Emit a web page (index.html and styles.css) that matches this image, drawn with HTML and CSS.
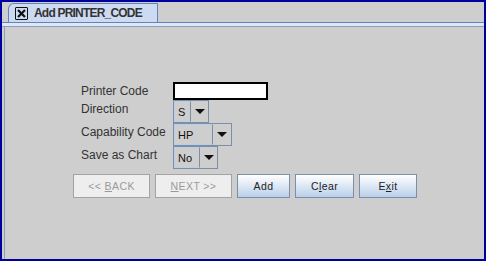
FILE: index.html
```html
<!DOCTYPE html>
<html lang="en">
<head>
    <meta charset="UTF-8">
    <title>Add PRINTER_CODE</title>
    <link rel="stylesheet" href="styles.css">
</head>
<body>
    <div class="frame">
        <div class="tabbar">
            <div class="tab">
                <span class="close-icon">
                    <svg width="11" height="11" viewBox="0 0 11 11">
                        <path d="M2 2 L9 9 M9 2 L2 9" stroke="#111" stroke-width="2.2" fill="none"/>
                    </svg>
                </span>
                <span class="tab-title">Add PRINTER_CODE</span>
            </div>
        </div>
        <div class="band"></div>
        <div class="panel">
            <div class="form">
                <div class="lbl">Printer Code</div>
                <div class="ctl"><div class="field"></div></div>

                <div class="lbl up">Direction</div>
                <div class="ctl">
                    <div class="combo combo-dir">
                        <div class="val">S</div>
                        <div class="arrow"><span class="tri"></span></div>
                    </div>
                </div>

                <div class="lbl up">Capability Code</div>
                <div class="ctl">
                    <div class="combo combo-cap">
                        <div class="val">HP</div>
                        <div class="arrow"><span class="tri"></span></div>
                    </div>
                </div>

                <div class="lbl up">Save as Chart</div>
                <div class="ctl">
                    <div class="combo combo-save">
                        <div class="val">No</div>
                        <div class="arrow"><span class="tri"></span></div>
                    </div>
                </div>
            </div>

            <div class="buttons">
                <button class="btn btn-nav" disabled>&lt;&lt; <u>B</u>ACK</button>
                <button class="btn btn-nav" disabled><u>N</u>EXT &gt;&gt;</button>
                <button class="btn btn-add">Add</button>
                <button class="btn btn-clear">C<u>l</u>ear</button>
                <button class="btn btn-exit">E<u>x</u>it</button>
            </div>
        </div>
    </div>
</body>
</html>
```

FILE: styles.css
```css
html, body {
    margin: 0;
    padding: 0;
    overflow: hidden;
}
body {
    font-family: "Liberation Sans", Arial, sans-serif;
    color: #333;
}
.frame {
    width: 486px;
    height: 261px;
    box-sizing: border-box;
    border: 2px solid #00009c;
    background: #cecece;
    display: flex;
    flex-direction: column;
}
.tabbar {
    height: 20px;
    padding-left: 6px;
    display: flex;
    align-items: flex-end;
}
.tab {
    width: 150px;
    height: 19px;
    box-sizing: border-box;
    background: #ccdaf2;
    border: 1px solid #6483bd;
    border-bottom: none;
    border-top-left-radius: 6px;
    display: flex;
    align-items: center;
    padding-left: 6px;
}
.close-icon {
    width: 13px;
    height: 13px;
    box-sizing: border-box;
    border: 1px solid #111;
    border-radius: 1px;
    display: flex;
    align-items: center;
    justify-content: center;
    margin-right: 6px;
}
.close-icon svg {
    display: block;
}
.tab-title {
    font-size: 12px;
    font-weight: bold;
    letter-spacing: -0.8px;
    color: #333;
}
.band {
    height: 3px;
    background: #dde7f6;
    border-top: 1px solid #6483bd;
    border-bottom: 1px solid #8e9dba;
}
.panel {
    flex: 1;
    margin-left: 2px;
    border-left: 1px solid #8e9dba;
    padding-top: 55px;
}
.form {
    display: grid;
    grid-template-columns: 92px auto;
    grid-template-rows: 18px 23px 23px 23px;
    margin-left: 76px;
}
.lbl {
    font-size: 12px;
    display: flex;
    align-items: center;
    color: #333;
}
.lbl.up {
    padding-bottom: 6px;
}
.ctl {
    display: flex;
    align-items: flex-start;
}
.field {
    width: 95px;
    height: 18px;
    box-sizing: border-box;
    border: 2px solid #000;
    background: #fff;
}
.combo {
    display: flex;
    height: 23px;
    box-sizing: border-box;
    border: 1px solid #7d8ea8;
    background: #cecece;
}
.val {
    box-sizing: border-box;
    border: 1px solid #b8cfe6;
    border-right: 1px solid #7d8ea8;
    font-size: 11px;
    color: #111;
    padding-left: 3px;
    display: flex;
    align-items: center;
}
.arrow {
    flex: 1;
    display: flex;
    align-items: center;
    justify-content: center;
}
.tri {
    width: 0;
    height: 0;
    border-left: 5px solid transparent;
    border-right: 5px solid transparent;
    border-top: 5px solid #111;
}
.combo-dir { width: 36px; }
.combo-dir .val { width: 17px; }
.combo-cap { width: 59px; }
.combo-cap .val { width: 39px; }
.combo-save { width: 45px; }
.combo-save .val { width: 26px; }
.buttons {
    display: flex;
    gap: 5px;
    margin-top: 5px;
    margin-left: 68px;
}
.btn {
    height: 24px;
    box-sizing: border-box;
    border: 1px solid #7d8ea8;
    background: linear-gradient(#ffffff, #b9d0ea);
    font-family: "Liberation Sans", Arial, sans-serif;
    font-size: 10.5px;
    color: #222;
    padding: 0;
    letter-spacing: 0.4px;
}
.btn u {
    text-underline-offset: 1px;
}
.btn-nav {
    width: 77px;
    background: #eeeeee;
    border-color: #a3a3a3;
    color: #9a9a9a;
}
.btn-add { width: 53px; }
.btn-clear { width: 59px; }
.btn-exit { width: 58px; }
```
